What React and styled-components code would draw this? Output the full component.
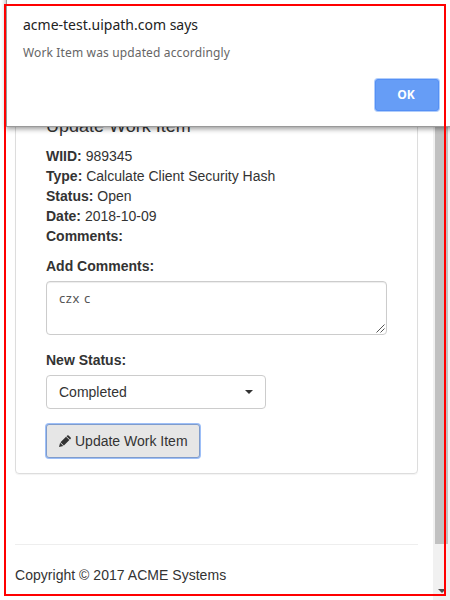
import React from "react";
import styled, { createGlobalStyle } from "styled-components";

const GlobalStyle = createGlobalStyle`
  * { box-sizing: border-box; }
  body {
    margin: 0;
    background: #fff;
    color: #333;
    font: 14px/20px "Liberation Sans", Arial, sans-serif;
    overflow: hidden;
  }
`;

const Screen = styled.div`
  position: relative;
  display: flex;
  width: 450px;
  height: 600px;
  overflow: hidden;
`;

const Page = styled.main`
  width: 433px;
  padding: 86px 15px 0;
`;

const Panel = styled.section`
  height: 388px;
  padding: 29px 30px 0;
  border: 1px solid #ddd;
  border-radius: 4px;
  box-shadow: 0 1px 1px rgba(0, 0, 0, 0.05);
`;

const Title = styled.h4`
  margin: 0 0 10px;
  font-size: 18px;
  font-weight: 400;
  line-height: 20px;
`;

const Detail = styled.div`
  height: 20px;
  white-space: nowrap;
`;

const Label = styled.label`
  display: block;
  margin-top: ${(p) => p.$gap}px;
  margin-bottom: 5px;
  font-weight: 700;
`;

const Comments = styled.div`
  display: flex;
  justify-content: space-between;
  width: 341px;
  height: 54px;
  padding: 6px 1px 1px 12px;
  border: 1px solid #ccc;
  border-radius: 4px;
  box-shadow: inset 0 1px 1px rgba(0, 0, 0, 0.075);
  color: #555;
  font: 13px/20px "Noto Sans", sans-serif;
  letter-spacing: 0.6px;
`;

const Grip = styled.svg`
  align-self: flex-end;
  width: 9px;
  height: 9px;
`;

const Select = styled.div`
  display: flex;
  align-items: center;
  justify-content: space-between;
  width: 220px;
  height: 34px;
  padding: 0 12px;
  border: 1px solid #ccc;
  border-radius: 4px;
`;

const Caret = styled.span`
  border: 4px solid transparent;
  border-top-color: #333;
  border-bottom: 0;
`;

const UpdateButton = styled.button`
  display: flex;
  align-items: center;
  gap: 4px;
  width: 154px;
  height: 34px;
  margin: 15px 0 0;
  padding: 0 12px;
  border: 1px solid #7f9ccc;
  border-radius: 3px;
  box-shadow: 0 0 0 1px #9dbff8;
  background: #e6e6e6;
  color: #333;
  font: inherit;
  white-space: nowrap;
`;

const Pencil = styled.svg`
  flex: none;
  width: 12px;
  height: 13px;
`;

const Footer = styled.footer`
  margin-top: 70px;
  padding-top: 20px;
  border-top: 1px solid #eee;
  letter-spacing: 0.03px;
`;

const Scrollbar = styled.div`
  display: flex;
  flex-direction: column;
  align-items: center;
  width: 17px;
  background: #f1f1f1;
`;

const Thumb = styled.div`
  width: 13px;
  height: 544px;
  background: #c1c1c1;
`;

const ScrollArrow = styled.span`
  margin-top: 45px;
  border: 4px solid transparent;
  border-top-color: #505050;
  border-bottom: 0;
`;

const Dialog = styled.div`
  position: absolute;
  left: 6px;
  top: -8px;
  width: 460px;
  height: 135px;
  padding: 20px 0 0 16px;
  border: 1px solid #999;
  background: #fff;
  box-shadow: 0 2px 5px rgba(0, 0, 0, 0.4);
  font-family: "Noto Sans", sans-serif;
`;

const Origin = styled.div`
  color: #222;
  font-size: 14px;
  line-height: 24px;
`;

const Message = styled.div`
  margin-top: 4px;
  color: #666;
  font-size: 12px;
  line-height: 24px;
  letter-spacing: 0.14px;
`;

const OkButton = styled.button`
  display: block;
  width: 64px;
  height: 32px;
  margin: 14px 0 0 352px;
  padding: 0 2px 0 0;
  border: 1px solid #5590f5;
  border-radius: 3px;
  box-shadow: 0 0 0 1px #b0cdfb;
  background: #669df6;
  color: #fff;
  font: 700 12px/28px "Open Sans", sans-serif;
`;

const Highlight = styled.div`
  position: absolute;
  left: 4px;
  top: 4px;
  width: 442px;
  height: 592px;
  border: 2px solid #f00;
  pointer-events: none;
`;

const details = [
  ["WIID", "989345"],
  ["Type", "Calculate Client Security Hash"],
  ["Status", "Open"],
  ["Date", "2018-10-09"],
  ["Comments", ""],
];

export default function App() {
  return (
    <Screen>
      <GlobalStyle />
      <Page>
        <Panel>
          <Title>Update Work Item</Title>
          {details.map(([name, value]) => (
            <Detail key={name}>
              <b>{name}:</b> {value}
            </Detail>
          ))}
          <Label $gap={10}>Add Comments:</Label>
          <Comments>
            czx c
            <Grip viewBox="0 0 9 9" stroke="#555" fill="none">
              <path d="M.5 8.5l8-8M4.5 8.5l4-4" />
            </Grip>
          </Comments>
          <Label $gap={15}>New Status:</Label>
          <Select>
            Completed
            <Caret />
          </Select>
          <UpdateButton>
            <Pencil viewBox="0 0 12 13" fill="#333">
              <path d="M0 12l1.1-4.3 3.2 3.2zM1.5 7.2L7 1.7l3.4 3.4-5.5 5.5zM7.5 1.2l.7-.7q.7-.6 1.4 0l2 2q.6.7 0 1.4l-.7.7z" />
            </Pencil>
            Update Work Item
          </UpdateButton>
        </Panel>
        <Footer>Copyright © 2017 ACME Systems</Footer>
      </Page>
      <Scrollbar>
        <Thumb />
        <ScrollArrow />
      </Scrollbar>
      <Dialog role="alertdialog">
        <Origin>acme-test.uipath.com says</Origin>
        <Message>Work Item was updated accordingly</Message>
        <OkButton>OK</OkButton>
      </Dialog>
      <Highlight />
    </Screen>
  );
}
